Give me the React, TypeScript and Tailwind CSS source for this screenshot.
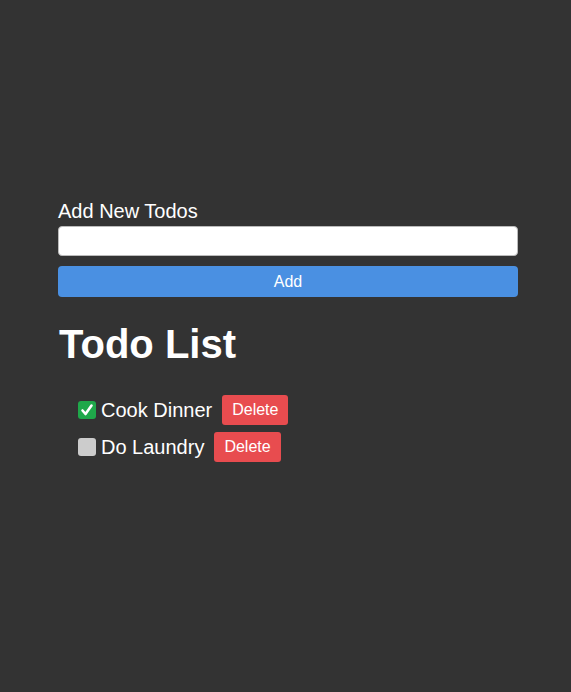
import { useState } from "react";

interface Todo {
  id: number;
  text: string;
  done: boolean;
}

const App = () => {
  const [todos, setTodos] = useState<Todo[]>([
    { id: 1, text: "Cook Dinner", done: true },
    { id: 2, text: "Do Laundry", done: false },
  ]);
  const [draft, setDraft] = useState("");

  const addTodo = () => {
    if (!draft.trim()) return;
    setTodos([...todos, { id: Date.now(), text: draft.trim(), done: false }]);
    setDraft("");
  };

  return (
    <div className="min-h-screen bg-[#333333] text-white font-['Liberation_Sans',Arial,sans-serif]">
      <div className="ml-[58px] w-[460px] pt-[200px]">
        {/* Add form */}
        <label className="block text-[20px] leading-[22px] mb-[4px]">Add New Todos</label>
        <input
          value={draft}
          onChange={(e) => setDraft(e.target.value)}
          className="block w-full h-[30px] bg-white text-black border border-[#bbbbbb] rounded-[4px] px-2 text-[16px] outline-none"
        />
        <button
          onClick={addTodo}
          className="mt-[10px] block w-full h-[31px] bg-[#4a90e2] text-white text-[16px] rounded-[4px]"
        >
          Add
        </button>

        {/* List */}
        <h1 className="mt-[25px] pl-[1px] text-[40px] leading-[45px] font-bold">Todo List</h1>
        <ul className="mt-[28px] pl-[20px]">
          {todos.map((todo) => (
            <li key={todo.id} className="flex items-center h-[30px] mb-[7px]">
              <button
                onClick={() =>
                  setTodos(todos.map((t) => (t.id === todo.id ? { ...t, done: !t.done } : t)))
                }
                className={`w-[18px] h-[18px] rounded-[3px] flex items-center justify-center ${
                  todo.done ? "bg-[#1fa84a]" : "bg-[#cccccc]"
                }`}
              >
                {todo.done && (
                  <svg viewBox="0 0 18 18" className="w-[18px] h-[18px]">
                    <path
                      d="M4.5 9.5 L7.5 13 L13.5 4.5"
                      fill="none"
                      stroke="white"
                      strokeWidth="2.6"
                      strokeLinecap="round"
                      strokeLinejoin="round"
                    />
                  </svg>
                )}
              </button>
              <span className="ml-[5px] text-[20px] leading-[23px]">{todo.text}</span>
              <button
                onClick={() => setTodos(todos.filter((t) => t.id !== todo.id))}
                className="ml-[10px] h-[30px] px-[10px] bg-[#e84c4f] text-white text-[16px] rounded-[3px]"
              >
                Delete
              </button>
            </li>
          ))}
        </ul>
      </div>
    </div>
  );
};

export default App;
